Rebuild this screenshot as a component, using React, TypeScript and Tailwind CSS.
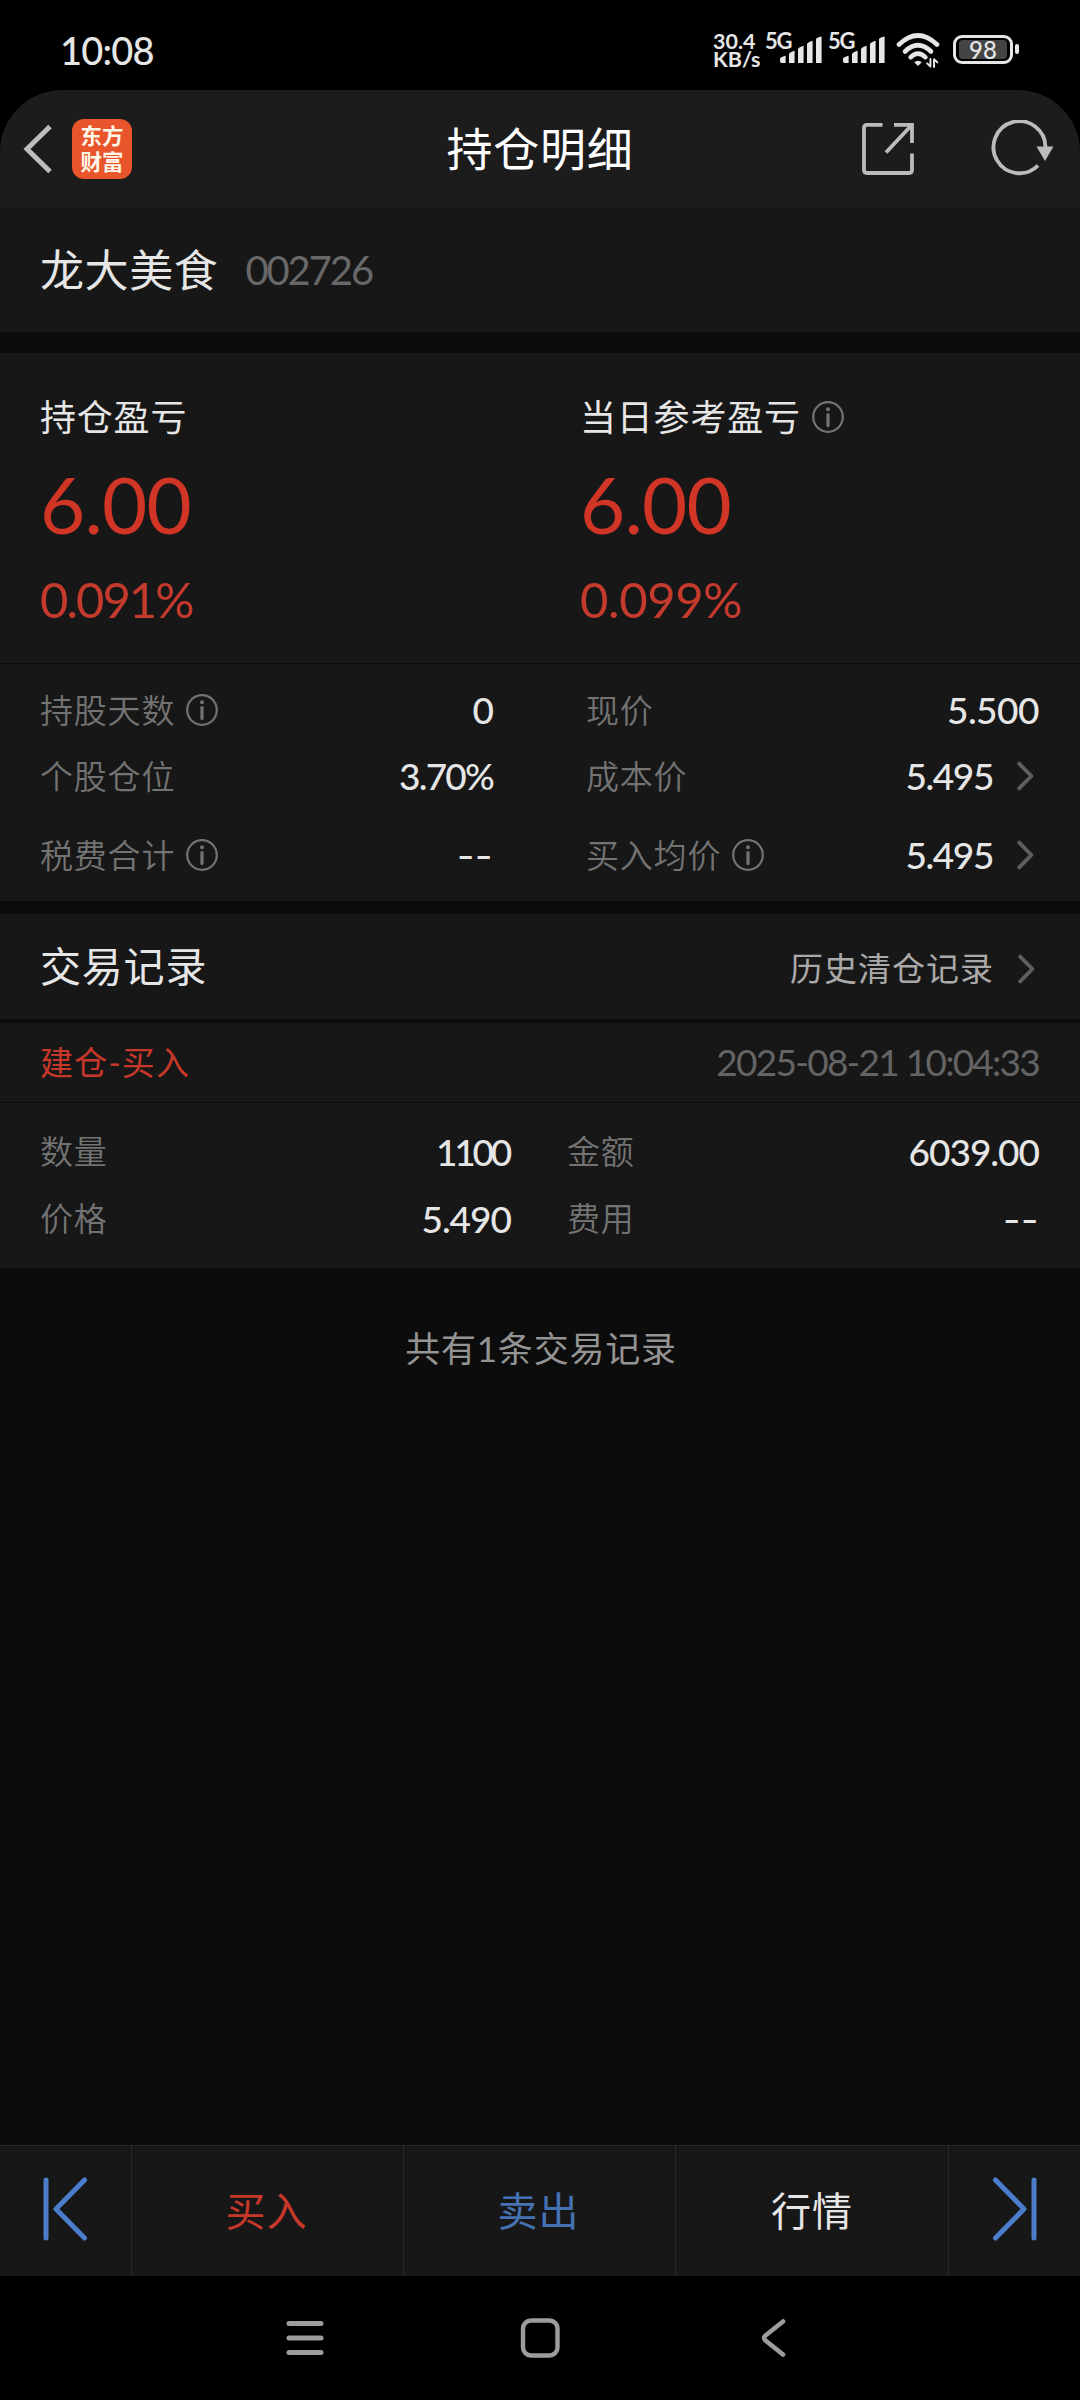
import type { ReactNode } from 'react'

type Metric = {
  label: string
  value: string
  info?: boolean
  link?: boolean
  spacing?: string
}

const metrics: [Metric, Metric][] = [
  [
    { label: '持股天数', value: '0', info: true },
    { label: '现价', value: '5.500', spacing: 'tracking-[-0.5px]' },
  ],
  [
    { label: '个股仓位', value: '3.70%', spacing: 'tracking-[-1.8px]' },
    { label: '成本价', value: '5.495', link: true, spacing: 'tracking-[-1.4px]' },
  ],
  [
    { label: '税费合计', value: '--', info: true, spacing: 'origin-right scale-x-130' },
    { label: '买入均价', value: '5.495', info: true, link: true, spacing: 'tracking-[-1.4px]' },
  ],
]

const trade: [Metric, Metric][] = [
  [
    { label: '数量', value: '1100', spacing: 'tracking-[-3.2px] pr-[2px]' },
    { label: '金额', value: '6039.00' },
  ],
  [
    { label: '价格', value: '5.490' },
    { label: '费用', value: '--', spacing: 'origin-right scale-x-130' },
  ],
]

function InfoIcon() {
  return (
    <svg width="32" height="32" viewBox="0 0 32 32" className="shrink-0">
      <circle cx="16" cy="16" r="14.8" fill="none" stroke="#737373" strokeWidth="2.2" />
      <circle cx="16" cy="8.3" r="2" fill="#737373" />
      <path d="M16 13.6v11" stroke="#737373" strokeWidth="3.2" strokeLinecap="round" />
    </svg>
  )
}

function Chevron() {
  return (
    <svg width="17" height="30" viewBox="0 0 17 30" className="shrink-0">
      <path d="M2.2 2.6 14.4 15 2.2 27.4" fill="none" stroke="#5e5e5e" strokeWidth="3.8" strokeLinecap="round" strokeLinejoin="round" />
    </svg>
  )
}

function Signal() {
  return (
    <div className="relative h-[34px] w-[57px]">
      <span className="absolute left-[-1px] top-0 text-[22px] leading-[17px] font-bold tracking-[-1.2px]">5G</span>
      <svg width="42" height="28" viewBox="0 0 42 28" className="absolute left-[14px] top-[4px]" fill="#e6e6e6">
        <path d="M0 25v-2q0-2 5.6-3.2V27H1.5Q0 27 0 25Z" />
        <path d="M9 27V18q1-2 5.6-3.2V27Z" />
        <path d="M18 27V13q1-2 5.6-3.2V27Z" />
        <path d="M27 27V8q1-2 5.6-3.2V27Z" />
        <path d="M36 27V3q1-2 5.6-2.6V27Z" />
      </svg>
    </div>
  )
}

function StatusBar() {
  return (
    <div className="flex h-[90px] items-start justify-between bg-black pl-[60px] pr-[61px] text-[#e6e6e6]">
      <span className="mt-[31px] text-[38px] leading-[38px] font-medium tracking-[-0.8px]">10:08</span>
      <div className="mt-[32px] flex items-start">
        <div className="w-[53px] text-[21.5px] leading-[18px] font-bold">
          30.4
          <br />
          KB/s
        </div>
        <Signal />
        <div className="w-[6px]" />
        <Signal />
        <svg width="44" height="36" viewBox="0 0 44 36" className="ml-[10px] mt-[1px]" fill="none" stroke="#e6e6e6" strokeLinecap="round">
          <path d="M3 11.5Q22-6.5 41 11.5" strokeWidth="4.6" />
          <path d="M9 18.5Q22 6 35 18.5" strokeWidth="4.6" />
          <path d="M14.5 24.3Q22 17 29.5 24.3" strokeWidth="4.4" />
          <path d="M18.2 29.3q3.8-3 7.6 0L22 33Z" fill="#e6e6e6" stroke="none" />
          <path d="M34.4 26v7.5M31.2 30.4l3 3M38 34v-7.5M41.3 29.4l-3-3" strokeWidth="2" />
        </svg>
        <div className="ml-[13px] mt-[3px] flex h-[29px] w-[60px] items-center justify-center rounded-[9px] border-[3px] border-[#e6e6e6]">
          <div className="flex h-[19px] w-[48px] items-center justify-center rounded-[4px] bg-[#444444]">
            <span className="text-[24px] leading-[20px] font-medium">98</span>
          </div>
        </div>
        <div className="ml-[2px] mt-[12px] h-[10px] w-[4px] rounded-[2px] bg-[#e6e6e6]" />
      </div>
    </div>
  )
}

function Header() {
  return (
    <div className="bg-black">
      <div className="grid h-[118px] grid-cols-3 items-center rounded-t-[62px] bg-[#1c1c1c] pl-[23px] pr-[26px]">
        <div className="flex items-center">
          <svg width="30" height="52" viewBox="0 0 30 52">
            <path d="M27 3.5 4 26l23 22.5" fill="none" stroke="#bdbdbd" strokeWidth="5" />
          </svg>
          <div className="ml-[19px] flex h-[60px] w-[60px] flex-col items-center justify-center rounded-[12px] bg-[#e9552a] text-[21.5px] leading-[26px] font-bold text-[#fff6ea]">
            <span>东方</span>
            <span>财富</span>
          </div>
        </div>
        <h1 className="pl-[3px] text-center text-[46px] leading-[60px] tracking-[0.8px] text-white">持仓明细</h1>
        <div className="flex items-center justify-end gap-[76px]">
          <svg width="54" height="54" viewBox="0 0 54 54" fill="none" stroke="#bcbcbc" strokeWidth="3.8">
            <path d="M21.5 2.8H6Q3 2.8 3 5.8V48Q3 51 6 51H48Q51 51 51 48V31.5" />
            <path d="M33 2.8H51V21" />
            <path d="M51 2.8 25 30.5" />
          </svg>
          <svg width="63" height="58" viewBox="0 0 63 58">
            <path d="M47 45.5A26 26 0 1 1 54.5 27" fill="none" stroke="#bcbcbc" strokeWidth="3.8" />
            <path d="M45.5 26.5h17L54 41Z" fill="#bcbcbc" />
          </svg>
        </div>
      </div>
    </div>
  )
}

type ProfitProps = {
  title: string
  amount: string
  rate: string
  rateSpacing: string
  info?: boolean
}

function Profit({ title, amount, rate, rateSpacing, info }: ProfitProps) {
  return (
    <div className="w-1/2 pl-[40px]">
      <div className="flex h-[50px] items-center gap-[11px] text-[36px] tracking-[0.8px] text-[#e6e6e6]">
        <span>{title}</span>
        {info && <InfoIcon />}
      </div>
      <div className="mt-[22px] flex h-[80px] items-center text-[78px] leading-[80px] tracking-[-0.8px] text-[#d03526]">{amount}</div>
      <div className={`mt-[30px] flex h-[50px] items-center text-[49px] leading-[50px] text-[#c43a2d] ${rateSpacing}`}>{rate}</div>
    </div>
  )
}

function Cell({ label, value, info, link, spacing = 'tracking-[-1px]', className }: Metric & { className: string }) {
  return (
    <div className={`flex items-center ${className}`}>
      <span className="text-[33px] tracking-[0.8px] font-[350] text-[#737373]">{label}</span>
      {info && (
        <span className="ml-[11px]">
          <InfoIcon />
        </span>
      )}
      <span className={`ml-auto mt-[-1px] text-[37px] font-medium text-[#e6e6e6] ${spacing}`}>{value}</span>
      {link && (
        <span className="ml-[24px] mr-[5px]">
          <Chevron />
        </span>
      )}
    </div>
  )
}

function BarItem({ children, className }: { children: ReactNode; className: string }) {
  return <div className={`flex items-center justify-center border-[#292929] ${className}`}>{children}</div>
}

export default function App() {
  return (
    <div className="flex h-[2400px] w-[1080px] flex-col bg-[#0c0c0c] font-['Lato','Noto_Sans_CJK_SC',sans-serif] leading-none">
      <StatusBar />
      <Header />

      <div className="flex h-[124px] items-center bg-[#171717] pl-[40px]">
        <span className="mt-[-1px] text-[44px] tracking-[0.6px] text-[#e6e6e6]">龙大美食</span>
        <span className="ml-[27px] text-[40px] tracking-[-2.1px] text-[#686868]">002726</span>
      </div>

      <div className="mt-[21px] flex h-[310px] bg-[#171717] pt-[39px]">
        <Profit title="持仓盈亏" amount="6.00" rate="0.091%" rateSpacing="tracking-[-2px]" />
        <Profit title="当日参考盈亏" amount="6.00" rate="0.099%" rateSpacing="tracking-[-0.4px]" info />
      </div>

      <div className="mt-px grid h-[237px] grid-rows-[66px_66px_92px] bg-[#171717] pt-[13px]">
        {metrics.map(([left, right]) => (
          <div key={left.label} className="flex pl-[40px]">
            <Cell {...left} className="w-[453px]" />
            <Cell {...right} className="ml-[93px] w-[453px]" />
          </div>
        ))}
      </div>

      <div className="mt-[13px] flex h-[105px] items-center bg-[#171717] pl-[40px] pr-[45px]">
        <h2 className="mt-[-1px] text-[41px] tracking-[0.8px] text-[#e6e6e6]">交易记录</h2>
        <span className="ml-auto mr-[24px] mt-[4px] text-[33px] tracking-[1px] text-[#a9a9a9]">历史清仓记录</span>
        <span className="mt-[5px]">
          <Chevron />
        </span>
      </div>

      <div className="mt-[4px] flex h-[79px] items-center justify-between bg-[#171717] pl-[40px] pr-[41px]">
        <span className="mt-[-1px] text-[33px] tracking-[1.2px] text-[#c8382a]">建仓-买入</span>
        <span className="mt-[-2px] text-[37px] tracking-[-1.75px] text-[#646464]">2025-08-21 10:04:33</span>
      </div>
      <div className="mt-px grid h-[165px] grid-rows-[67px_67px] bg-[#171717] pt-[15px]">
        {trade.map(([left, right]) => (
          <div key={left.label} className="flex pl-[40px]">
            <Cell {...left} className="w-[471px]" />
            <Cell {...right} className="ml-[56px] w-[472px]" />
          </div>
        ))}
      </div>

      <p className="mt-[60px] pl-[2px] text-center text-[35px] leading-[40px] tracking-[0.8px] text-[#949494]">共有1条交易记录</p>

      <div className="mt-auto flex h-[131px] border-t border-[#292929] bg-[#171717]">
        <BarItem className="w-[132px] border-r">
          <svg width="45" height="64" viewBox="0 0 45 64" fill="none" stroke="#4b7dcb" strokeWidth="5" strokeLinecap="round" strokeLinejoin="round" className="mt-[-4px]">
            <path d="M3 3v58" />
            <path d="M41.5 3 13 32l28.500 29" />
          </svg>
        </BarItem>
        <BarItem className="w-[272px] border-r">
          <span className="mt-[-1px] mr-[2px] text-[40px] tracking-[1px] text-[#c8382a]">买入</span>
        </BarItem>
        <BarItem className="w-[272px] border-r">
          <span className="mt-[-1px] mr-[2px] text-[40px] tracking-[1px] text-[#4672b4]">卖出</span>
        </BarItem>
        <BarItem className="w-[273px] border-r">
          <span className="mt-[-1px] text-[40px] tracking-[1px] text-[#e6e6e6]">行情</span>
        </BarItem>
        <BarItem className="flex-1">
          <svg width="45" height="64" viewBox="0 0 45 64" fill="none" stroke="#4b7dcb" strokeWidth="5" strokeLinecap="round" strokeLinejoin="round" className="mt-[-4px]">
            <path d="M42 3v58" />
            <path d="M3.500 3 32 32 3.500 61" />
          </svg>
        </BarItem>
      </div>

      <div className="flex h-[124px] items-center bg-black pl-[285px]">
        <svg width="40" height="40" viewBox="0 0 40 40" stroke="#9d9d9d" strokeWidth="5" strokeLinecap="round">
          <path d="M4 5.500h32M4 20h32M4 34.500h32" />
        </svg>
        <svg width="40" height="40" viewBox="0 0 40 40" className="ml-[195px]">
          <rect x="3" y="2.500" width="34.500" height="35" rx="8" fill="none" stroke="#9d9d9d" strokeWidth="4.400" />
        </svg>
        <svg width="28" height="42" viewBox="0 0 28 42" className="ml-[200px]">
          <path d="M23 4.500 5.500 18.500q-2.800 2.500 0 5L23 37.500" fill="none" stroke="#9d9d9d" strokeWidth="4.600" strokeLinecap="round" strokeLinejoin="round" />
        </svg>
      </div>
    </div>
  )
}
